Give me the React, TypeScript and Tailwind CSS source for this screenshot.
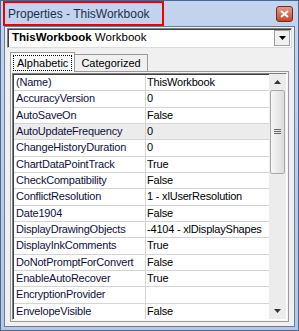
import React from 'react'

const rows: [string, string][] = [
  ['(Name)', 'ThisWorkbook'],
  ['AccuracyVersion', '0'],
  ['AutoSaveOn', 'False'],
  ['AutoUpdateFrequency', '0'],
  ['ChangeHistoryDuration', '0'],
  ['ChartDataPointTrack', 'True'],
  ['CheckCompatibility', 'False'],
  ['ConflictResolution', '1 - xlUserResolution'],
  ['Date1904', 'False'],
  ['DisplayDrawingObjects', '-4104 - xlDisplayShapes'],
  ['DisplayInkComments', 'True'],
  ['DoNotPromptForConvert', 'False'],
  ['EnableAutoRecover', 'True'],
  ['EncryptionProvider', ''],
  ['EnvelopeVisible', 'False'],
]

export default function App() {
  return (
    <div
      className="w-[299px] h-[331px] flex flex-col bg-gradient-to-b from-[#c2d4ee] to-[#b3c8e6] px-[3px] pb-[3px] border border-[#4d6890] overflow-hidden"
      style={{ fontFamily: '"Liberation Sans", Arial, sans-serif' }}
    >
      {/* title bar */}
      <div className="h-[25px] flex items-center justify-between shrink-0">
        <div className="h-[25px] border-2 border-[#f00000] flex items-center pl-[3px] pr-[12px] -ml-[1px]">
          <span className="text-[12px] text-[#1e2f4d]">Properties - ThisWorkbook</span>
        </div>
        <div className="w-[17px] h-[16px] mr-[2px] rounded-[3px] border border-[#7a2a1a] bg-gradient-to-b from-[#e49a86] to-[#c5442a] flex items-center justify-center">
          <svg width="9" height="8" viewBox="0 0 9 8">
            <path d="M1 1 L8 7 M8 1 L1 7" stroke="#ffffff" strokeWidth="2" />
          </svg>
        </div>
      </div>

      {/* client */}
      <div className="flex-1 flex flex-col bg-[#f0f0f0] border border-[#6b7d96] px-[2px] pt-[1px] min-h-0">
        {/* combo */}
        <div className="h-[20px] flex items-center bg-white border border-[#808080] border-b-[#dcdcdc] border-r-[#dcdcdc] shadow-[inset_1px_1px_0_#404040]">
          <div className="flex-1 min-w-0 pl-[4px] text-[11.5px] text-black whitespace-nowrap">
            <span className="font-bold">ThisWorkbook</span> <span>Workbook</span>
          </div>
          <div className="w-[16px] h-[16px] mr-[1px] bg-[#f0f0f0] border border-[#a0a0a0] flex items-center justify-center">
            <svg width="7" height="4" viewBox="0 0 7 4">
              <path d="M0 0 H7 L3.5 4 Z" fill="#000" />
            </svg>
          </div>
        </div>

        {/* tabs */}
        <div className="h-[21px] mt-[2px] flex items-end pl-[3px] shrink-0">
          <div className="h-[20px] px-[3px] flex items-center bg-[#f8f8f8] border border-b-0 border-[#9a9a9a] relative z-10 -mb-[1px]">
            <span className="text-[11px] px-[3px] outline outline-1 outline-dotted outline-black leading-[14px]">Alphabetic</span>
          </div>
          <div className="h-[17px] px-[6px] flex items-center bg-[#f0f0f0] border border-b-0 border-l-0 border-[#9a9a9a]">
            <span className="text-[11px]">Categorized</span>
          </div>
        </div>

        {/* grid panel */}
        <div className="flex-1 min-h-0 mx-[3px] border border-[#9a9a9a] bg-[#f4f4f4] p-[1px] flex flex-col">
          <div className="flex-1 min-h-0 flex border border-[#808080] border-r-[#ffffff] border-b-[#ffffff] shadow-[inset_1px_1px_0_#404040] bg-white overflow-hidden">
            <div className="flex-1 min-w-0 pl-[1px] pt-[1px] overflow-hidden">
              {rows.map(([k, v], i) => (
                <div
                  key={k}
                  className={`h-[16.35px] flex border-b border-[#d4d4d4] text-[11px] tracking-[-0.2px] leading-[15px] ${i === 3 ? 'bg-[#ececec]' : 'bg-white'}`}
                >
                  <div className="w-[132px] shrink-0 pl-[2px] border-r border-[#d4d4d4] text-[#101040] whitespace-nowrap overflow-hidden">{k}</div>
                  <div className="flex-1 min-w-0 pl-[1px] text-black whitespace-nowrap overflow-hidden">{v}</div>
                </div>
              ))}
            </div>
            {/* scrollbar */}
            <div className="w-[17px] shrink-0 bg-[#ececec] flex flex-col items-center">
              <div className="h-[16px] w-full flex items-center justify-center">
                <svg width="7" height="4" viewBox="0 0 7 4">
                  <path d="M0 4 H7 L3.5 0 Z" fill="#333" />
                </svg>
              </div>
              <div className="w-[15px] h-[84px] rounded-[2px] border border-[#a8a8a8] bg-gradient-to-r from-[#f6f6f6] to-[#dcdcdc] flex items-center justify-center">
                <svg width="7" height="6" viewBox="0 0 7 6">
                  <path d="M0 0.5 H7 M0 2.5 H7 M0 4.5 H7" stroke="#666" strokeWidth="1" />
                </svg>
              </div>
              <div className="flex-1" />
              <div className="h-[16px] w-full flex items-center justify-center">
                <svg width="7" height="4" viewBox="0 0 7 4">
                  <path d="M0 0 H7 L3.5 4 Z" fill="#333" />
                </svg>
              </div>
            </div>
          </div>
        </div>
        <div className="h-[4px] shrink-0" />
      </div>
    </div>
  )
}
